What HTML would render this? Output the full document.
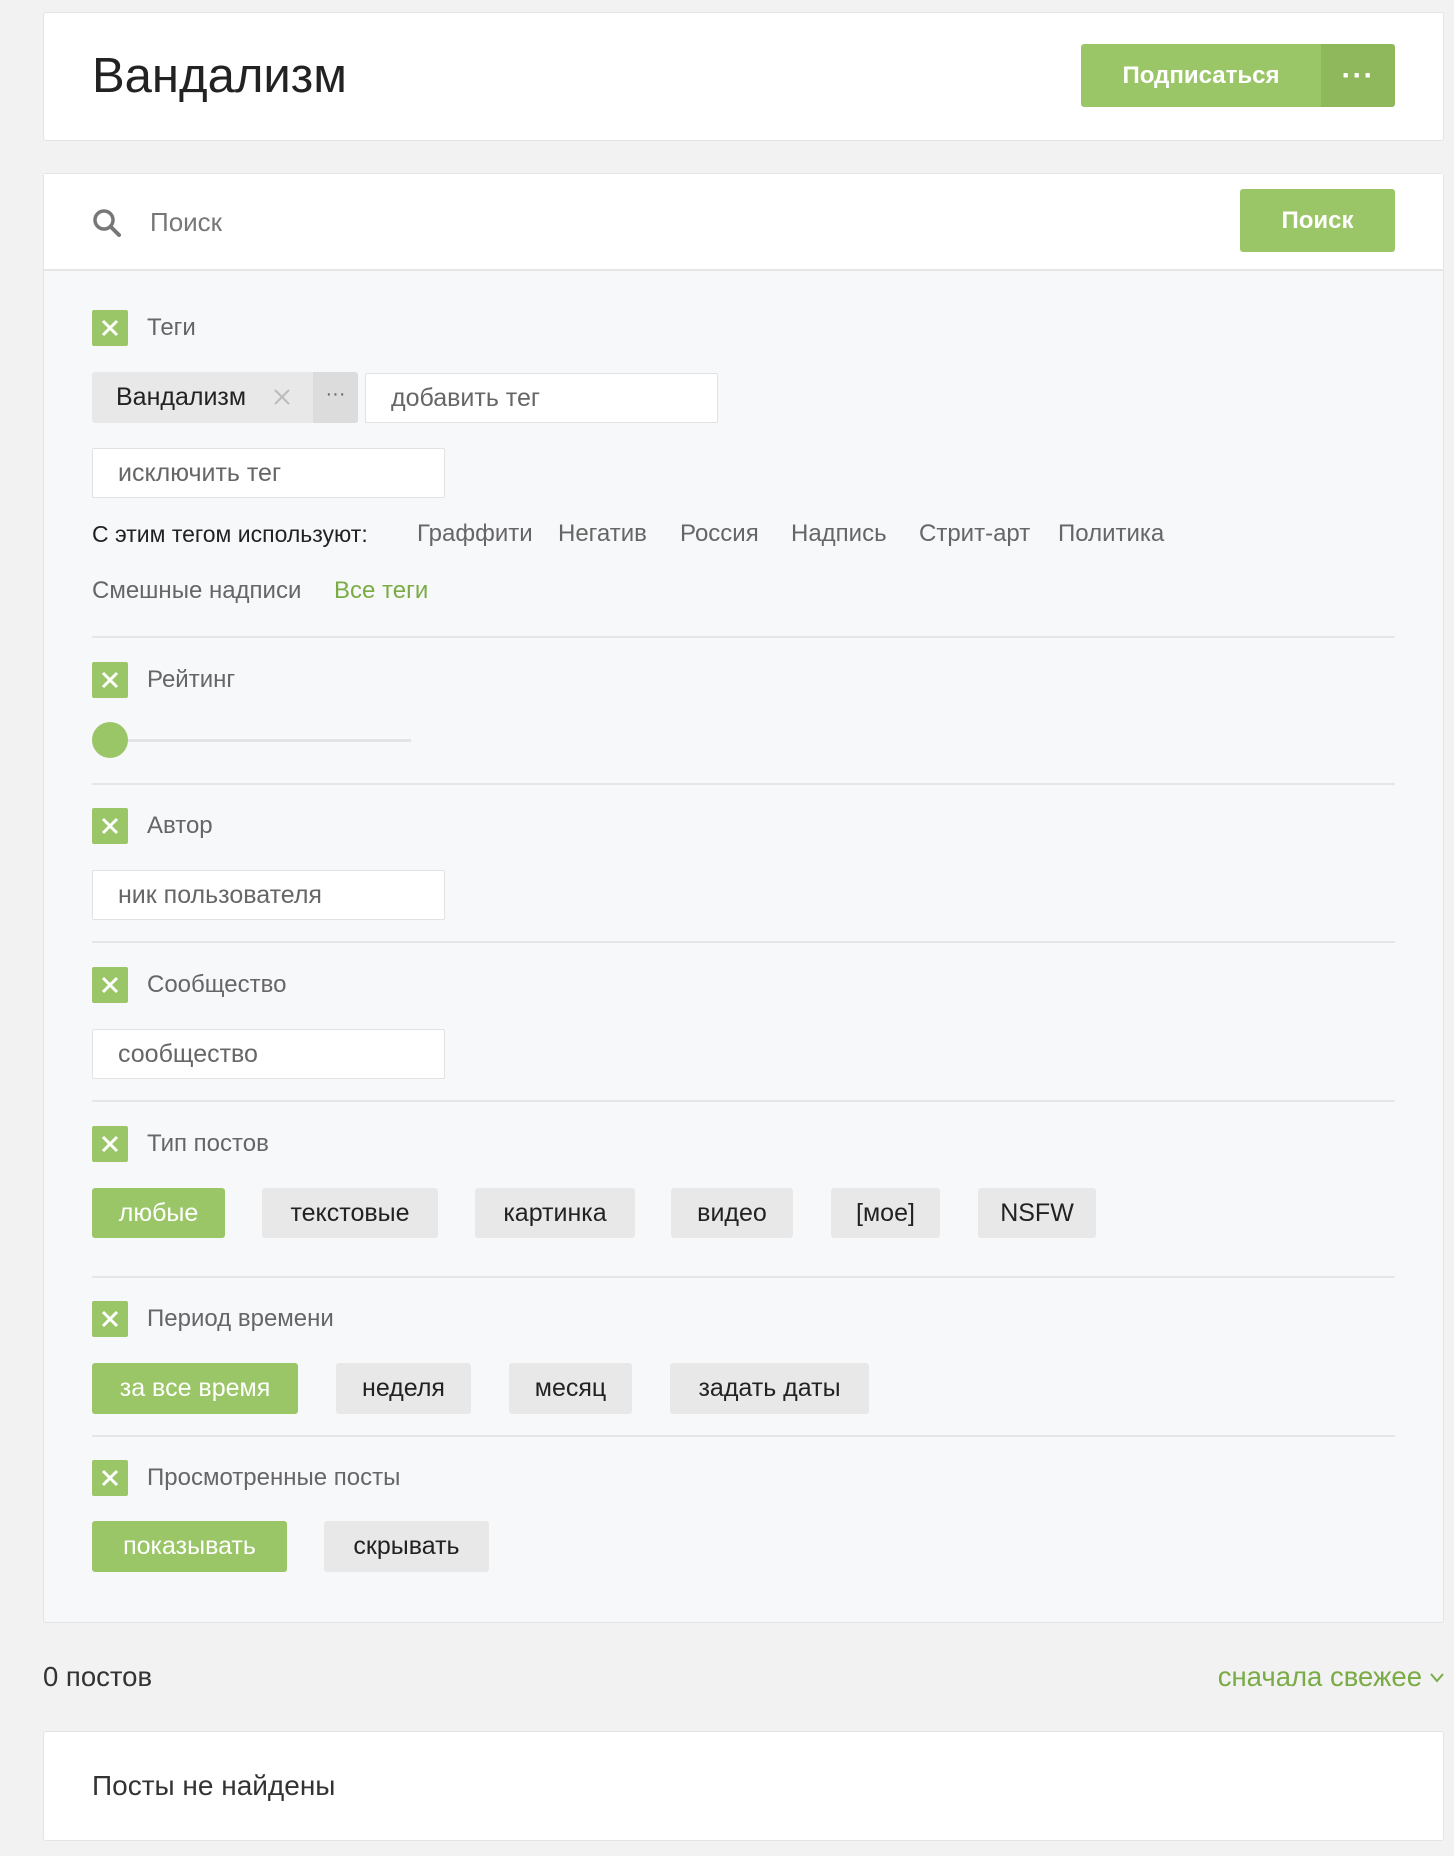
<!DOCTYPE html>
<html><head><meta charset="utf-8"><style>
*{box-sizing:border-box;margin:0;padding:0}
body{width:1454px;height:1856px;background:#f2f2f2;font-family:"Liberation Sans",Arial,sans-serif;position:relative;overflow:hidden;color:#222}
.a{position:absolute}
.card{position:absolute;background:#fff;border:1px solid #e4e4e4;border-radius:3px}
.btn{position:absolute;border-radius:3px;display:flex;align-items:center;justify-content:center;font-size:25px;background:#e8e8e8;color:#222}
.btn.g{background:#9bc667;color:#fff}
.cb{position:absolute;left:92px;width:36px;height:36px;background:#9bc667;border-radius:2px}
.cb svg{position:absolute;left:9px;top:9px}
.lbl{position:absolute;left:147px;font-size:24px;color:#666;line-height:28px}
.inp{position:absolute;background:#fff;border:1px solid #e2e2e2;border-radius:2px;font-size:25px;color:#666;padding-left:25px;display:flex;align-items:center}
.hr{position:absolute;left:92px;width:1303px;height:2px;background:#e6e6e6}
.t{position:absolute;font-size:24px;color:#666;line-height:28px}
</style></head><body>
<div class="card" style="left:43px;top:12px;width:1401px;height:129px"></div>
<div class="a" style="left:92px;top:47px;font-size:49px;line-height:58px;color:#222">Вандализм</div>
<div class="btn g" style="left:1081px;top:44px;width:240px;height:63px;border-radius:3px 0 0 3px;font-weight:bold;font-size:24px">Подписаться</div>
<div class="btn" style="left:1321px;top:44px;width:74px;height:63px;background:#8fb85c;border-radius:0 3px 3px 0;color:#fff;font-size:30px;font-weight:bold;letter-spacing:1px">···</div>

<div class="card" style="left:43px;top:173px;width:1401px;height:1450px;background:#f7f8fa"></div>
<div class="a" style="left:44px;top:174px;width:1399px;height:97px;background:#fff;border-bottom:2px solid #e6e6e6"></div>
<svg class="a" style="left:92px;top:208px" width="30" height="30" viewBox="0 0 30 30"><circle cx="12" cy="12" r="9" fill="none" stroke="#777" stroke-width="3.5"/><path d="M18.5 18.5L27 27" stroke="#777" stroke-width="4" stroke-linecap="round"/></svg>
<div class="a" style="left:150px;top:207px;font-size:26px;color:#777;line-height:30px">Поиск</div>
<div class="btn g" style="left:1240px;top:189px;width:155px;height:63px;font-weight:bold;font-size:24px">Поиск</div>

<div class="cb" style="top:310px"><svg width="18" height="18"><path d="M2 2L16 16M16 2L2 16" stroke="#fff" stroke-width="3"/></svg></div>
<div class="lbl" style="top:314px">Теги</div>
<div class="a" style="left:92px;top:372px;width:266px;height:51px;background:#e8e8e8;border-radius:3px"></div>
<div class="a" style="left:313px;top:372px;width:45px;height:51px;background:#dcdcdc;border-radius:0 3px 3px 0;text-align:center;color:#666;font-size:20px;line-height:44px">···</div>
<div class="a" style="left:116px;top:382px;font-size:25px;line-height:30px;color:#222">Вандализм</div>
<svg class="a" style="left:273px;top:388px" width="18" height="18"><path d="M2 2L16 16M16 2L2 16" stroke="#bbb" stroke-width="2"/></svg>
<div class="inp" style="left:365px;top:373px;width:353px;height:50px">добавить тег</div>
<div class="inp" style="left:92px;top:448px;width:353px;height:50px">исключить тег</div>
<div class="t" style="left:92px;top:520px;color:#222;font-size:23px">С этим тегом используют:</div>
<div class="t" style="left:417px;top:520px">Граффити</div>
<div class="t" style="left:558px;top:520px">Негатив</div>
<div class="t" style="left:680px;top:520px">Россия</div>
<div class="t" style="left:791px;top:520px">Надпись</div>
<div class="t" style="left:919px;top:520px">Стрит-арт</div>
<div class="t" style="left:1058px;top:520px">Политика</div>
<div class="t" style="left:92px;top:577px">Смешные надписи</div>
<div class="t" style="left:334px;top:577px;color:#7aab45">Все теги</div>
<div class="hr" style="top:636px"></div>

<div class="cb" style="top:662px"><svg width="18" height="18"><path d="M2 2L16 16M16 2L2 16" stroke="#fff" stroke-width="3"/></svg></div>
<div class="lbl" style="top:666px">Рейтинг</div>
<div class="a" style="left:110px;top:739px;width:301px;height:3px;background:#e4e4e4"></div>
<div class="a" style="left:92px;top:722px;width:36px;height:36px;border-radius:50%;background:#9bc667"></div>
<div class="hr" style="top:783px"></div>

<div class="cb" style="top:808px"><svg width="18" height="18"><path d="M2 2L16 16M16 2L2 16" stroke="#fff" stroke-width="3"/></svg></div>
<div class="lbl" style="top:812px">Автор</div>
<div class="inp" style="left:92px;top:870px;width:353px;height:50px">ник пользователя</div>
<div class="hr" style="top:941px"></div>

<div class="cb" style="top:967px"><svg width="18" height="18"><path d="M2 2L16 16M16 2L2 16" stroke="#fff" stroke-width="3"/></svg></div>
<div class="lbl" style="top:971px">Сообщество</div>
<div class="inp" style="left:92px;top:1029px;width:353px;height:50px">сообщество</div>
<div class="hr" style="top:1100px"></div>

<div class="cb" style="top:1126px"><svg width="18" height="18"><path d="M2 2L16 16M16 2L2 16" stroke="#fff" stroke-width="3"/></svg></div>
<div class="lbl" style="top:1130px">Тип постов</div>
<div class="btn g" style="left:92px;top:1188px;width:133px;height:50px">любые</div>
<div class="btn" style="left:262px;top:1188px;width:176px;height:50px">текстовые</div>
<div class="btn" style="left:475px;top:1188px;width:160px;height:50px">картинка</div>
<div class="btn" style="left:671px;top:1188px;width:122px;height:50px">видео</div>
<div class="btn" style="left:831px;top:1188px;width:109px;height:50px">[мое]</div>
<div class="btn" style="left:978px;top:1188px;width:118px;height:50px">NSFW</div>
<div class="hr" style="top:1276px"></div>

<div class="cb" style="top:1301px"><svg width="18" height="18"><path d="M2 2L16 16M16 2L2 16" stroke="#fff" stroke-width="3"/></svg></div>
<div class="lbl" style="top:1305px">Период времени</div>
<div class="btn g" style="left:92px;top:1363px;width:206px;height:51px">за все время</div>
<div class="btn" style="left:336px;top:1363px;width:135px;height:51px">неделя</div>
<div class="btn" style="left:509px;top:1363px;width:123px;height:51px">месяц</div>
<div class="btn" style="left:670px;top:1363px;width:199px;height:51px">задать даты</div>
<div class="hr" style="top:1435px"></div>

<div class="cb" style="top:1460px"><svg width="18" height="18"><path d="M2 2L16 16M16 2L2 16" stroke="#fff" stroke-width="3"/></svg></div>
<div class="lbl" style="top:1464px">Просмотренные посты</div>
<div class="btn g" style="left:92px;top:1521px;width:195px;height:51px">показывать</div>
<div class="btn" style="left:324px;top:1521px;width:165px;height:51px">скрывать</div>

<div class="a" style="left:43px;top:1661px;font-size:27.5px;line-height:32px;color:#333">0 постов</div>
<div class="a" style="left:1150px;top:1661px;width:272px;text-align:right;font-size:27.5px;line-height:32px;color:#7aab45">сначала свежее</div>
<svg class="a" style="left:1430px;top:1673px" width="14" height="10"><path d="M1 1L7 8L13 1" fill="none" stroke="#7aab45" stroke-width="2"/></svg>

<div class="card" style="left:43px;top:1731px;width:1401px;height:110px"></div>
<div class="a" style="left:92px;top:1769px;font-size:28px;line-height:34px;color:#333">Посты не найдены</div>
</body></html>
